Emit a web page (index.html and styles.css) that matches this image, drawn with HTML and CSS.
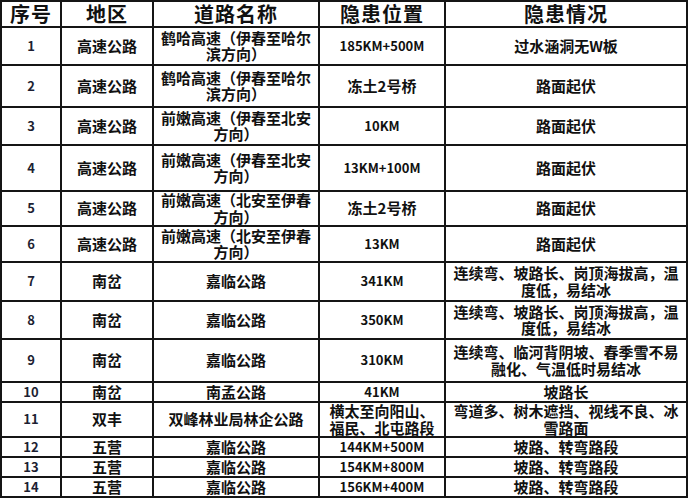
FILE: index.html
```html
<!DOCTYPE html>
<html lang="zh-CN">
<head>
<meta charset="utf-8">
<title>道路隐患</title>
<link rel="stylesheet" href="styles.css">
</head>
<body>
<table class="grid">
  <colgroup>
    <col class="c-no"><col class="c-area"><col class="c-road"><col class="c-pos"><col class="c-desc">
  </colgroup>
  <thead>
    <tr class="r-head"><th>序号</th><th>地区</th><th>道路名称</th><th>隐患位置</th><th>隐患情况</th></tr>
  </thead>
  <tbody>
    <tr class="r1"><td class="no">1</td><td>高速公路</td><td>鹤哈高速（伊春至哈尔滨方向）</td><td class="lat">185KM+500M</td><td>过水涵洞无W板</td></tr>
    <tr class="r2"><td class="no">2</td><td>高速公路</td><td>鹤哈高速（伊春至哈尔滨方向）</td><td>冻土2号桥</td><td>路面起伏</td></tr>
    <tr class="r3"><td class="no">3</td><td>高速公路</td><td>前嫩高速（伊春至北安方向）</td><td class="lat">10KM</td><td>路面起伏</td></tr>
    <tr class="r4"><td class="no">4</td><td>高速公路</td><td>前嫩高速（伊春至北安方向）</td><td class="lat">13KM+100M</td><td>路面起伏</td></tr>
    <tr class="r5"><td class="no">5</td><td>高速公路</td><td>前嫩高速（北安至伊春方向）</td><td>冻土2号桥</td><td>路面起伏</td></tr>
    <tr class="r6"><td class="no">6</td><td>高速公路</td><td>前嫩高速（北安至伊春方向）</td><td class="lat">13KM</td><td>路面起伏</td></tr>
    <tr class="r7"><td class="no">7</td><td>南岔</td><td>嘉临公路</td><td class="lat">341KM</td><td>连续弯、坡路长、岗顶海拔高，温度低，易结冰</td></tr>
    <tr class="r8"><td class="no">8</td><td>南岔</td><td>嘉临公路</td><td class="lat">350KM</td><td>连续弯、坡路长、岗顶海拔高，温度低，易结冰</td></tr>
    <tr class="r9"><td class="no">9</td><td>南岔</td><td>嘉临公路</td><td class="lat">310KM</td><td>连续弯、临河背阴坡、春季雪不易融化、气温低时易结冰</td></tr>
    <tr class="r10"><td class="no">10</td><td>南岔</td><td>南孟公路</td><td class="lat">41KM</td><td>坡路长</td></tr>
    <tr class="r11"><td class="no">11</td><td>双丰</td><td>双峰林业局林企公路</td><td>横太至向阳山、福民、北屯路段</td><td>弯道多、树木遮挡、视线不良、冰雪路面</td></tr>
    <tr class="r12"><td class="no">12</td><td>五营</td><td>嘉临公路</td><td class="lat">144KM+500M</td><td>坡路、转弯路段</td></tr>
    <tr class="r13"><td class="no">13</td><td>五营</td><td>嘉临公路</td><td class="lat">154KM+800M</td><td>坡路、转弯路段</td></tr>
    <tr class="r14"><td class="no">14</td><td>五营</td><td>嘉临公路</td><td class="lat">156KM+400M</td><td>坡路、转弯路段</td></tr>
  </tbody>
</table>
</body>
</html>
```
FILE: styles.css
```css
html, body {
  margin: 0;
  padding: 0;
  background: #ffffff;
}

body {
  font-family: "Noto Sans CJK SC", "Noto Sans", sans-serif;
  color: #111111;
}

.grid {
  width: 688px;
  table-layout: fixed;
  border-collapse: separate;
  border-spacing: 2px;
  background: #151515;
}

.c-no { width: 58px; }
.c-area { width: 90px; }
.c-road { width: 164px; }
.c-pos { width: 124px; }
.c-desc { width: 240px; }

.grid th,
.grid td {
  background: #ffffff;
  padding: 0 3px;
  text-align: center;
  vertical-align: middle;
  font-weight: 700;
  overflow: visible;
}

.grid th {
  font-size: 20px;
  line-height: 24px;
  letter-spacing: 1px;
}

.grid td {
  font-size: 15px;
  line-height: 16.5px;
}

.grid td.no {
  font-size: 13px;
  color: #1d1f33;
}

.grid td.lat {
  font-size: 13px;
}

.r-head { height: 24px; }
.r1 { height: 36px; }
.r2 { height: 40px; }
.r3 { height: 36px; }
.r4 { height: 44px; }
.r5 { height: 33px; }
.r6 { height: 34px; }
.r7 { height: 37px; }
.r8 { height: 36px; }
.r9 { height: 41px; }
.r10 { height: 18px; }
.r11 { height: 33px; }
.r12 { height: 18px; }
.r13 { height: 18px; }
.r14 { height: 18px; }
```
